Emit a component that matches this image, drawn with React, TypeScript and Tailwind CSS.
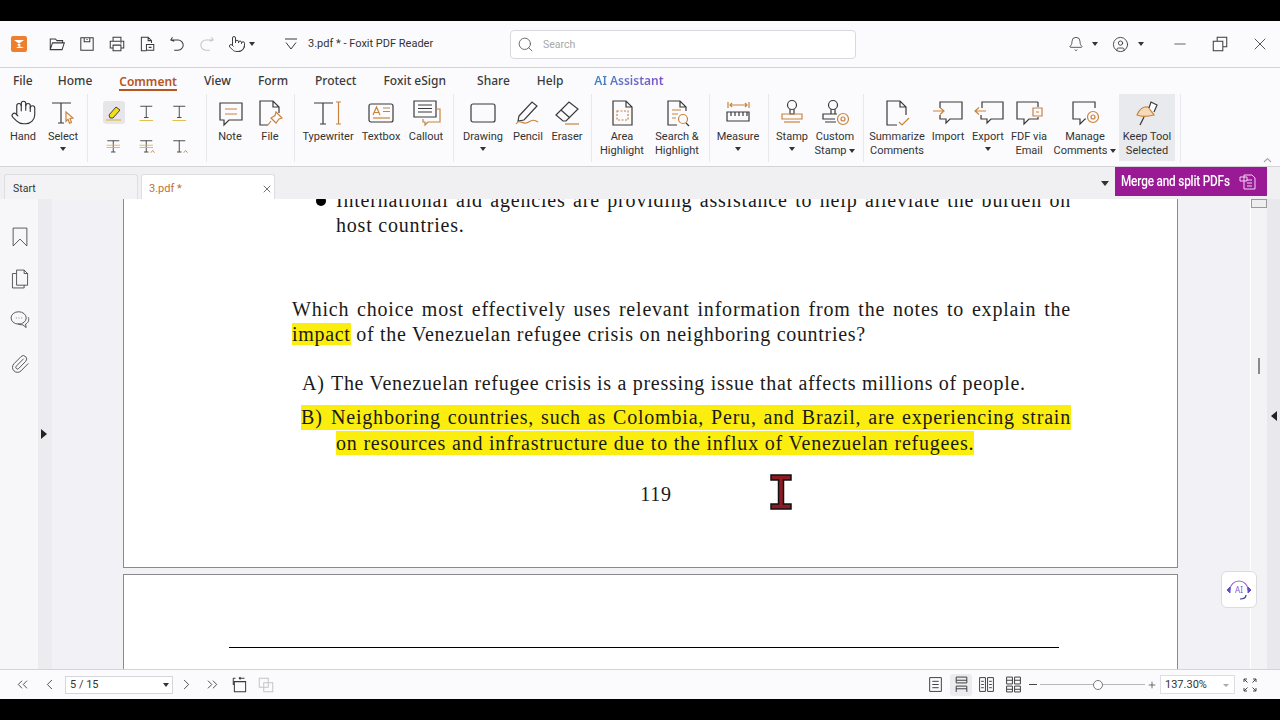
import type { ReactNode } from 'react';
import { ChevronLeft, ChevronRight, ChevronsLeft, ChevronsRight, Hand, Pointer, Search, Bell, CircleUser, X, Minus, Plus, Paperclip } from 'lucide-react';

const OR = '#c8843f';
const YL = '#e0b93a';

function Ico({ size = 32, children }: { size?: number; children: ReactNode }) {
  return (
    <svg width={size} height={size} viewBox="0 0 32 32" fill="none" stroke="#3a3a3a" strokeWidth="1.2">
      {children}
    </svg>
  );
}

function Caret({ className = '' }: { className?: string }) {
  return <span className={`inline-block w-0 h-0 border-x-[3.5px] border-x-transparent border-t-[4px] border-t-[#333] ${className}`} />;
}

const bubble = 'M6 6h22v17H15l-5 5v-5H6z';
const page = 'M7 4h13l6 6v18H7z M20 4v6h6';

const icons: Record<string, ReactNode> = {
  select: (
    <Ico>
      <path d="M5 6h19M14 6v20M11 26h6" />
      <path d="M19 15l7 6-3 .5 1.5 4-2 .8-1.500-4-2 2z" stroke={OR} />
    </Ico>
  ),
  note: (
    <Ico>
      <path d={bubble} />
      <path d="M11 12h12M11 17h12" stroke={OR} />
    </Ico>
  ),
  file: (
    <Ico>
      <path d="M14 28H6V4h13l6 6v6M19 4v6h6" />
      <path d="M22 15l6 6-3 1-3 4-5-5 4-2.500zM17 24l-3 4" stroke={OR} />
    </Ico>
  ),
  typewriter: (
    <Ico>
      <path d="M2 6h19M11 6v21M8 27h6" />
      <path d="M24 5h5M26.500 5v22M24 27h5" stroke={OR} />
    </Ico>
  ),
  textbox: (
    <Ico>
      <rect x="4" y="7" width="24" height="18" rx="2" />
      <path d="M8 18l3.500-8 3.500 8M9.500 15.500h4M18 11h7M18 14.500h7" stroke={OR} />
      <path d="M8 21h17" stroke={OR} />
    </Ico>
  ),
  callout: (
    <Ico>
      <path d="M4 4h22v16H4zM8 8h14M8 11.500h14M8 15h14" />
      <path d="M26 12h4v13H18l-3 3v-3h-2v-3" stroke={OR} />
    </Ico>
  ),
  drawing: (
    <Ico>
      <rect x="4" y="7" width="24" height="18" rx="2" />
    </Ico>
  ),
  pencil: (
    <Ico>
      <path d="M7 19L20 5l5 4-13 14-6 1z" />
      <path d="M4 27c4-5 6 0 10-1s6-5 12-1" stroke={OR} />
    </Ico>
  ),
  eraser: (
    <Ico>
      <path d="M5 18L18 5l9 7-12 12h-3zM10 13l9 8" />
      <path d="M14 27h14" stroke={OR} />
    </Ico>
  ),
  area: (
    <Ico>
      <path d={page} />
      <path d="M11 14h11v9H11z" stroke={OR} strokeDasharray="2 1.500" />
    </Ico>
  ),
  searchHl: (
    <Ico>
      <path d="M16 28H7V4h12l6 6v4M19 4v6h6" />
      <path d="M11 13h9M11 17h6M11 21h4" stroke={OR} />
      <circle cx="22" cy="22" r="4.500" stroke={OR} />
      <path d="M25 26l3 3" />
    </Ico>
  ),
  measure: (
    <Ico>
      <path d="M6 5v6M27 5v6M8 8h17M10 6l-2 2 2 2M23 6l2 2-2 2" stroke={OR} />
      <path d="M5 15h22v9H5zM9 15v4M13 15v4M17 15v4M21 15v4M25 15v4" />
    </Ico>
  ),
  stamp: (
    <Ico>
      <circle cx="16" cy="8" r="4.500" />
      <path d="M14 12v5h4v-5" />
      <path d="M6 17h20v5H6z" stroke={OR} />
      <path d="M8 25h16" stroke={OR} />
    </Ico>
  ),
  custom: (
    <Ico>
      <circle cx="14" cy="8" r="4.500" />
      <path d="M12 12v5h4v-5M18 17H4v5h12M6 25h11" />
      <circle cx="24" cy="22" r="5.500" stroke={OR} />
      <circle cx="24" cy="22" r="2" stroke={OR} />
    </Ico>
  ),
  summarize: (
    <Ico>
      <path d="M16 28H6V4h13l6 6v8M19 4v6h6" />
      <path d="M18 25l3 3 7-7" stroke={OR} />
    </Ico>
  ),
  import: (
    <Ico>
      <path d="M8 11V5h22v17H18l-4 4v-4H8v-4" />
      <path d="M1 14h10M8 10.500l4 3.500-4 3.500" stroke={OR} />
    </Ico>
  ),
  export: (
    <Ico>
      <path d="M10 11V5h21v17H19l-4 4v-4H9v-4" />
      <path d="M14 14H3M7 10.500L3 14l4 3.500" stroke={OR} />
    </Ico>
  ),
  fdf: (
    <Ico>
      <path d="M25 5H4v17h7v5l5-5h9v-2" />
      <path d="M25 5v5" />
      <path d="M20 11h9v8h-9zM23 15h3" stroke={OR} />
    </Ico>
  ),
  manage: (
    <Ico>
      <path d="M26 11V5H4v17h7v5l5-5h1" />
      <circle cx="24" cy="20" r="5.500" stroke={OR} />
      <circle cx="24" cy="20" r="2" stroke={OR} />
    </Ico>
  ),
  keep: (
    <Ico>
      <path d="M6 18c2-6 7-9 11-8l6 8c-4 1-12 2-17 0z" fill="#f4d9ba" stroke={OR} />
      <path d="M18 11l2-6 6 3-3 7" fill="#fff" />
      <path d="M13 20l-4 8" />
    </Ico>
  ),
};

function T({ under, strike, mark }: { under?: boolean; strike?: boolean; mark?: boolean }) {
  return (
    <Ico size={24}>
      <path d={strike || mark ? 'M7 9h16M15 9v15M12 24h6' : 'M7 7h16M15 7v15M12 22h6'} />
      {under && <path d="M6 26h18" stroke={YL} />}
      {strike && <path d="M6 15h18M6 18h18" stroke={YL} />}
      {mark && <path d="M21 25l2.500-3 2.500 3" stroke={OR} />}
    </Ico>
  );
}

function Item({ w, lines, icon, caret, inline, active }: { w: string; lines: string[]; icon?: ReactNode; caret?: boolean; inline?: boolean; active?: boolean }) {
  return (
    <div className={`flex flex-col items-center shrink-0 pt-[1px] ${w} ${active ? 'bg-[#e9eaed] h-[67px]' : ''}`}>
      <div className="h-[35px] flex items-center justify-center">{icon}</div>
      {lines.map((l, i) => (
        <div key={l} className="h-[14px] leading-[14px] text-[11px] text-[#333] whitespace-nowrap flex items-center">
          {l}
          {inline && i === 1 && <Caret className="ml-[3px]" />}
        </div>
      ))}
      {caret && <Caret className="mt-[3px]" />}
    </div>
  );
}

function Group({ className, children }: { className: string; children: ReactNode }) {
  return <div className={`flex h-[68px] border-r border-[#e8e8ec] shrink-0 ${className}`}>{children}</div>;
}

function TopBar() {
  const box = 'w-[30px] flex items-center justify-center shrink-0';
  return (
    <div className="h-[47px] flex items-center border-b border-[#d4d4d8] bg-[#fbfbfd]">
      <div className="w-[30px] ml-[4px] flex justify-center shrink-0">
        <svg width="16" height="16" viewBox="0 0 16 16">
          <rect width="16" height="16" rx="2" fill="#ee7f2d" />
          <path d="M3 4h10L6 9l7 3H5l5-3z" fill="#fff" />
        </svg>
      </div>
      <div className="w-[8px] shrink-0" />
      <div className={box}>
        <Ico size={18}><path d="M4 26V7h9l3 3h10v4M4 26l4-12h21l-4 12z" strokeWidth="1.800" /></Ico>
      </div>
      <div className={box}>
        <Ico size={18}><path d="M5 5h22v22H5zM11 5v7h10V5M15 8h2" strokeWidth="1.800" /></Ico>
      </div>
      <div className={box}>
        <Ico size={18}><path d="M9 11V4h14v7M9 23H4V11h24v12h-5M9 18h14v10H9zM22 14h2" strokeWidth="1.800" /></Ico>
      </div>
      <div className={box}>
        <Ico size={18}><path d="M15 28H6V4h12l6 6v4M18 4v6h6M15 17h13v10H15zM19 22h5" strokeWidth="1.800" /></Ico>
      </div>
      <div className={box}>
        <Ico size={18}><path d="M8 4L5 9l6 2M5 9h13a8 8 0 0 1 0 18h-7" strokeWidth="1.800" /></Ico>
      </div>
      <div className={box}>
        <svg width="18" height="18" viewBox="0 0 32 32" fill="none" stroke="#c4c4c8" strokeWidth="1.800"><path d="M24 4l3 5-6 2M27 9H14a8 8 0 0 0 0 18h7" /></svg>
      </div>
      <div className={box}>
        <Pointer size={18} strokeWidth={1.3} color="#3a3a3a" />
      </div>
      <Caret className="ml-[-3px]" />
      <div className="w-[28px] shrink-0" />
      <div className="w-[16px] flex justify-center shrink-0">
        <Ico size={16}><path d="M4 6h24M6 13l10 13 10-13" strokeWidth="2" /></Ico>
      </div>
      <div className="ml-[9px] pt-[1px] w-[202px] shrink-0 text-[11px] text-[#333] whitespace-nowrap">3.pdf * - Foxit PDF Reader</div>
      <div className="w-[346px] h-[29px] shrink-0 rounded-[4px] border border-[#d9d9dc] bg-white flex items-center pl-[6px]">
        <Search size={17} strokeWidth={1.2} color="#555" />
        <span className="ml-[9px] pt-[1px] text-[10.500px] text-[#a8a8a8]">Search</span>
      </div>
      <div className="ml-auto flex items-center pr-[10px]">
        <Bell size={16} strokeWidth={1.2} color="#333" />
        <Caret className="ml-[8px]" />
        <CircleUser size={17} strokeWidth={1.2} color="#333" className="ml-[14px]" />
        <Caret className="ml-[9px]" />
        <Minus size={18} strokeWidth={1.1} color="#444" className="ml-[27px]" />
        <div className="ml-[22px]">
          <Ico size={18}><path d="M4 11h17v17H4zM11 11V4h17v17h-7" strokeWidth="1.800" /></Ico>
        </div>
        <X size={20} strokeWidth={1} color="#333" className="ml-[21px]" />
      </div>
    </div>
  );
}

function MenuBar() {
  const m = "text-[12px] font-medium font-['Noto_Sans',sans-serif] text-[#3a3a3a] whitespace-nowrap";
  return (
    <div className="h-[26px] flex items-center pl-[13px] gap-[27px] bg-[#fbfbfd]">
      <span className={`${m} -mr-[2px]`}>File</span>
      <span className={m}>Home</span>
      <span className="text-[12px] font-semibold font-['Noto_Sans',sans-serif] text-[#b5561c] border-b-2 border-[#b5561c] leading-[15px] translate-y-[1px]">Comment</span>
      <span className={m}>View</span>
      <span className={m}>Form</span>
      <span className={m}>Protect</span>
      <span className={`${m} mr-[4px]`}>Foxit eSign</span>
      <span className={m}>Share</span>
      <span className={m}>Help</span>
      <span className="ml-[4px] text-[12px] font-semibold font-['Noto_Sans',sans-serif] whitespace-nowrap bg-gradient-to-r from-[#3a86c0] to-[#7c4fc8] bg-clip-text text-transparent">AI Assistant</span>
    </div>
  );
}

function Ribbon() {
  return (
    <div className="relative h-[73px] flex bg-[#fbfbfd] border-b border-[#d4d4d8]">
      <Group className="w-[88px]">
        <Item w="w-[46px]" lines={['Hand']} icon={<Hand size={27} strokeWidth={1} color="#333" />} />
        <Item w="w-[34px]" lines={['Select']} icon={icons.select} caret />
      </Group>
      <Group className="w-[119px] pl-[9px] pt-[2px]">
        <div className="grid grid-cols-[33px_33px_33px] grid-rows-[33px_33px]">
          <div className="flex items-center justify-center">
            <div className="w-[22px] h-[23px] rounded-[3px] bg-[#e6e6ea] flex items-center justify-center">
              <svg width="18" height="18" viewBox="0 0 18 18" fill="none">
                <path d="M4 11l7-8 4 3-7 8H5z" fill="#f4dc1e" stroke="#444" strokeWidth="1" />
                <path d="M1 16h15" stroke={YL} strokeWidth="1.200" />
              </svg>
            </div>
          </div>
          <div className="flex items-center justify-center"><T under /></div>
          <div className="flex items-center justify-center"><T under /></div>
          <div className="flex items-center justify-center"><T strike /></div>
          <div className="flex items-center justify-center"><T strike mark /></div>
          <div className="flex items-center justify-center"><T mark /></div>
        </div>
      </Group>
      <Group className="w-[88px] pl-[3px]">
        <Item w="w-[40px]" lines={['Note']} icon={icons.note} />
        <Item w="w-[40px]" lines={['File']} icon={icons.file} />
      </Group>
      <Group className="w-[159px] pl-[3px]">
        <Item w="w-[60px]" lines={['Typewriter']} icon={icons.typewriter} />
        <Item w="w-[46px]" lines={['Textbox']} icon={icons.textbox} />
        <Item w="w-[44px]" lines={['Callout']} icon={icons.callout} />
      </Group>
      <Group className="w-[138px] pl-[4px]">
        <Item w="w-[50px]" lines={['Drawing']} icon={icons.drawing} caret />
        <Item w="w-[40px]" lines={['Pencil']} icon={icons.pencil} />
        <Item w="w-[38px]" lines={['Eraser']} icon={icons.eraser} />
      </Group>
      <Group className="w-[118px] pl-[3px]">
        <Item w="w-[54px]" lines={['Area', 'Highlight']} icon={icons.area} />
        <Item w="w-[56px]" lines={['Search &', 'Highlight']} icon={icons.searchHl} />
      </Group>
      <Group className="w-[59px] pl-[3px]">
        <Item w="w-[50px]" lines={['Measure']} icon={icons.measure} caret />
      </Group>
      <Group className="w-[95px] pl-[3px]">
        <Item w="w-[40px]" lines={['Stamp']} icon={icons.stamp} caret />
        <Item w="w-[46px]" lines={['Custom', 'Stamp']} icon={icons.custom} inline />
      </Group>
      <Group className="w-[317px] pl-[3px]">
        <Item w="w-[60px]" lines={['Summarize', 'Comments']} icon={icons.summarize} />
        <Item w="w-[42px]" lines={['Import']} icon={icons.import} />
        <Item w="w-[38px]" lines={['Export']} icon={icons.export} caret />
        <Item w="w-[44px]" lines={['FDF via', 'Email']} icon={icons.fdf} />
        <Item w="w-[68px]" lines={['Manage', 'Comments']} icon={icons.manage} inline />
        <Item w="w-[56px]" lines={['Keep Tool', 'Selected']} icon={icons.keep} active />
      </Group>
      <svg className="absolute right-[8px] bottom-[3px]" width="9" height="6" viewBox="0 0 9 6" fill="none" stroke="#aaa" strokeWidth="1.200"><path d="M1 5l3.500-3.500L8 5" /></svg>
    </div>
  );
}

function TabRow() {
  return (
    <div className="h-[32px] flex items-end bg-[#f0f0f3]">
      <div className="ml-[4px] w-[134px] h-[25px] flex items-center pl-[8px] pt-[4px] rounded-t-[3px] border border-b-0 border-[#dedee2] bg-[#f3f3f6] text-[10.500px] text-[#333]">Start</div>
      <div className="ml-[3px] w-[134px] h-[25px] flex items-center justify-between pl-[7px] pr-[1px] pt-[4px] rounded-t-[3px] border border-b-0 border-[#dedee2] bg-white text-[11px] text-[#c0703a]">
        3.pdf *
        <X size={12} strokeWidth={1.4} color="#333" />
      </div>
      <div className="ml-auto mr-[13px] self-start flex items-center">
        <Caret className="mr-[6px] border-x-[4.500px] border-t-[5px] mt-[3px]" />
        <div className="w-[152px] h-[29px] bg-[#9a1a96] flex items-center pl-[6px] text-white">
          <span className="w-[117px] text-[14px] font-medium tracking-[-0.2px] whitespace-nowrap scale-x-[.84] origin-left">Merge and split PDFs</span>
          <svg width="20" height="20" viewBox="0 0 20 20" fill="none" stroke="#f2d6f0" strokeWidth="1"><path d="M6 3h8l3 3v11H6zM9 8h5M9 11h5M9 14h5M2 5h7v4H2z" /></svg>
        </div>
      </div>
    </div>
  );
}

const hl = 'bg-[#fbee0f]';
const just = 'text-justify [text-align-last:justify]';

function Doc() {
  return (
    <div className="flex-1 h-[470px] bg-[#f2f2f6] overflow-hidden relative">
      <div className="ml-[71px] w-[1055px] h-[369px] bg-white border-x border-b border-[#8a8a8a] overflow-hidden font-['Liberation_Serif',serif] text-[20px] leading-[25px] text-[#1a1a1a] tracking-[0.8px]">
        <div className="flex ml-[168px] w-[779px] -mt-[11px]">
          <div className="w-[10px] h-[10px] rounded-full bg-black ml-[24px] mr-[10px] mt-[8px] shrink-0" />
          <div className="flex-1">
            <div className={just}>International aid agencies are providing assistance to help alleviate the burden on</div>
            <div>host countries.</div>
          </div>
        </div>
        <div className="ml-[168px] w-[779px] mt-[59px]">
          <div className={just}>Which choice most effectively uses relevant information from the notes to explain the</div>
          <div className="whitespace-nowrap tracking-[0.7px]"><span className={hl}>impact</span> of the Venezuelan refugee crisis on neighboring countries?</div>
        </div>
        <div className="ml-[178px] mt-[24px] whitespace-nowrap flex tracking-[0.7px]">
          <span className="w-[29px] shrink-0">A)</span>The Venezuelan refugee crisis is a pressing issue that affects millions of people.
        </div>
        <div className={`ml-[177px] w-[770px] mt-[9px] flex ${hl}`}>
          <span className="w-[30px] shrink-0">B)</span>
          <div className={`flex-1 ${just}`}>Neighboring countries, such as Colombia, Peru, and Brazil, are experiencing strain</div>
        </div>
        <div className="ml-[212px] mt-[1px] whitespace-nowrap">
          <span className={`${hl} py-[1px]`}>on resources and infrastructure due to the influx of Venezuelan refugees.</span>
        </div>
        <div className="w-[1055px] pl-[9px] mt-[26px] text-center">119</div>
      </div>
      <div className="ml-[71px] mt-[6px] w-[1055px] h-[100px] bg-white border border-[#8a8a8a] pt-[72px]">
        <div className="ml-[105px] w-[830px] h-px bg-black" />
      </div>
      <svg className="absolute left-[718px] top-[275px]" width="22" height="36" viewBox="0 0 22 36">
        <path d="M1 1h20v5h-7.500v24h7.500v5H1v-5h7.500V6H1z" fill="#8e1a24" stroke="#111" strokeWidth="1.500" />
      </svg>
    </div>
  );
}

function Main() {
  return (
    <div className="h-[470px] flex relative">
      <div className="w-[38px] bg-[#f7f7fa] flex flex-col items-center pl-[2px] pt-[27px] shrink-0">
        <Ico size={22}><path d="M6 3h20v26L16 19 6 29z" /></Ico>
        <div className="mt-[20px]"><Ico size={22}><path d="M11 8V3h11l5 5v17H11zM22 3v5h5M11 8H5v21h17v-4" /></Ico></div>
        <div className="mt-[19px]">
          <Ico size={22}><ellipse cx="14" cy="13" rx="11" ry="9" /><path d="M10 13h1M14 13h1M18 13h1M28 12c2 5-1 9-4 10l1 5-5-4c-3 0-5 0-7-2" /></Ico>
        </div>
        <div className="mt-[23px]">
          <Paperclip size={20} strokeWidth={1} color="#3a3a3a" />
        </div>
      </div>
      <div className="w-[14px] bg-[#ececf0] flex items-center pl-[3px] shrink-0">
        <span className="w-0 h-0 border-y-[5px] border-y-transparent border-l-[6px] border-l-[#222]" />
      </div>
      <Doc />
      <div className="w-[17px] bg-[#f3f3f6] border-l border-white flex flex-col items-end shrink-0">
        <div className="w-[16px] h-[9px] border border-[#9a9a9e] bg-[#eeeef1]" />
        <div className="w-[2px] h-[16px] mt-[150px] mr-[7px] bg-[#8a8a8e]" />
      </div>
      <div className="w-[13px] bg-[#e9e9ed] flex flex-col items-center pt-[212px] shrink-0">
        <span className="w-0 h-0 border-y-[5px] border-y-transparent border-r-[6px] border-r-[#222]" />
      </div>
      <div className="absolute left-[1221px] top-[372px] w-[36px] h-[37px] rounded-[6px] bg-white border border-[#dcdce0] flex items-center justify-center">
        <svg width="26" height="26" viewBox="0 0 26 26" fill="none">
          <path d="M4 13a9 9 0 0 1 18 0" stroke="#a060d0" strokeWidth="1.200" />
          <path d="M4 10v6L1 13zM22 10v6l3-3z" fill="#5a50c8" stroke="#5a50c8" />
          <path d="M20 18c0 3-3 4-6 4" stroke="#2a3a90" strokeWidth="1.200" />
          <text x="13" y="16" textAnchor="middle" fontSize="8" fill="#7a60d0" stroke="none" fontFamily="Noto Sans">AI</text>
        </svg>
      </div>
    </div>
  );
}

function StatusBar() {
  const c = '#333';
  return (
    <div className="h-[30px] flex items-center bg-[#fbfbfd] border-t border-[#d4d4d8] relative">
      <ChevronsLeft size={17} strokeWidth={1.200} color={c} className="ml-[14px]" />
      <ChevronLeft size={17} strokeWidth={1.200} color={c} className="ml-[10px]" />
      <div className="ml-[7px] w-[108px] h-[18px] border border-[#d6d6da] bg-white flex items-center justify-between pl-[4px] pr-[3px] pt-[1px] text-[11px] text-[#333]">
        5 / 15
        <Caret />
      </div>
      <ChevronRight size={17} strokeWidth={1.200} color={c} className="ml-[5px]" />
      <ChevronsRight size={17} strokeWidth={1.200} color={c} className="ml-[9px]" />
      <div className="ml-[10px]">
        <Ico size={18}><path d="M6 10h20v18H6zM4 4v12M4 4h4M14 4h10M14 4l3-2M14 4l3 2" strokeWidth="1.800" /></Ico>
      </div>
      <div className="ml-[8px]">
        <svg width="18" height="18" viewBox="0 0 32 32" fill="none" stroke="#c4c4c8" strokeWidth="1.800"><path d="M4 4h16v16H4zM12 12h16v16H12z" /></svg>
      </div>
      <div className="ml-auto flex items-center">
        <Ico size={17}><path d="M5 3h22v26H5zM10 10h12M10 16h12M10 22h12" strokeWidth="1.800" /></Ico>
        <div className="ml-[6px] w-[22px] h-[22px] rounded-[3px] bg-[#ececf0] flex items-center justify-center">
          <Ico size={17}><path d="M6 2v11h20V2M6 2h20M6 8h20M6 30V19h20v11M6 24h20" strokeWidth="1.800" /></Ico>
        </div>
        <div className="ml-[6px]"><Ico size={17}><path d="M3 3h11v26H3zM18 3h11v26H18zM6 10h5M6 16h5M6 22h5M21 10h5M21 16h5M21 22h5" strokeWidth="1.800" /></Ico></div>
        <div className="ml-[10px]"><Ico size={17}><path d="M3 2h11v13H3zM18 2h11v13H18zM3 19h11v11H3zM18 19h11v11H18zM3 8h11M18 8h11M3 25h11M18 25h11" strokeWidth="1.800" /></Ico></div>
        <div className="ml-[7px] w-[8px] h-[1.500px] bg-[#444]" />
        <div className="relative ml-[3px] w-[105px] h-[1px] bg-[#b8b8bc]">
          <div className="absolute left-[53px] -top-[4.500px] w-[10px] h-[10px] rounded-full bg-white border border-[#777]" />
        </div>
        <Plus size={10} strokeWidth={1.800} color="#444" className="ml-[2px]" />
        <div className="ml-[3px] w-[75px] h-[19px] border border-[#dedee2] bg-white flex items-center justify-between pl-[4px] pr-[5px] pt-[1px] text-[11px] text-[#333]">
          137.30%
          <span className="w-0 h-0 border-x-[3px] border-x-transparent border-t-[3px] border-t-[#aaa]" />
        </div>
        <svg className="ml-[8px] mr-[23px]" width="14" height="14" viewBox="0 0 14 14" fill="none" stroke="#444" strokeWidth="1"><path d="M1 1h3M1 1v3M1 1l3.500 3.500M13 1h-3M13 1v3M13 1L9.500 4.500M1 13h3M1 13v-3M1 13l3.500-3.500M13 13h-3M13 13v-3M13 13L9.500 9.500" /></svg>
      </div>
    </div>
  );
}

export default function App() {
  return (
    <div className="w-[1280px] h-[720px] bg-black overflow-hidden pt-[21px] font-['Roboto',sans-serif]">
      <TopBar />
      <MenuBar />
      <Ribbon />
      <TabRow />
      <Main />
      <StatusBar />
    </div>
  );
}
